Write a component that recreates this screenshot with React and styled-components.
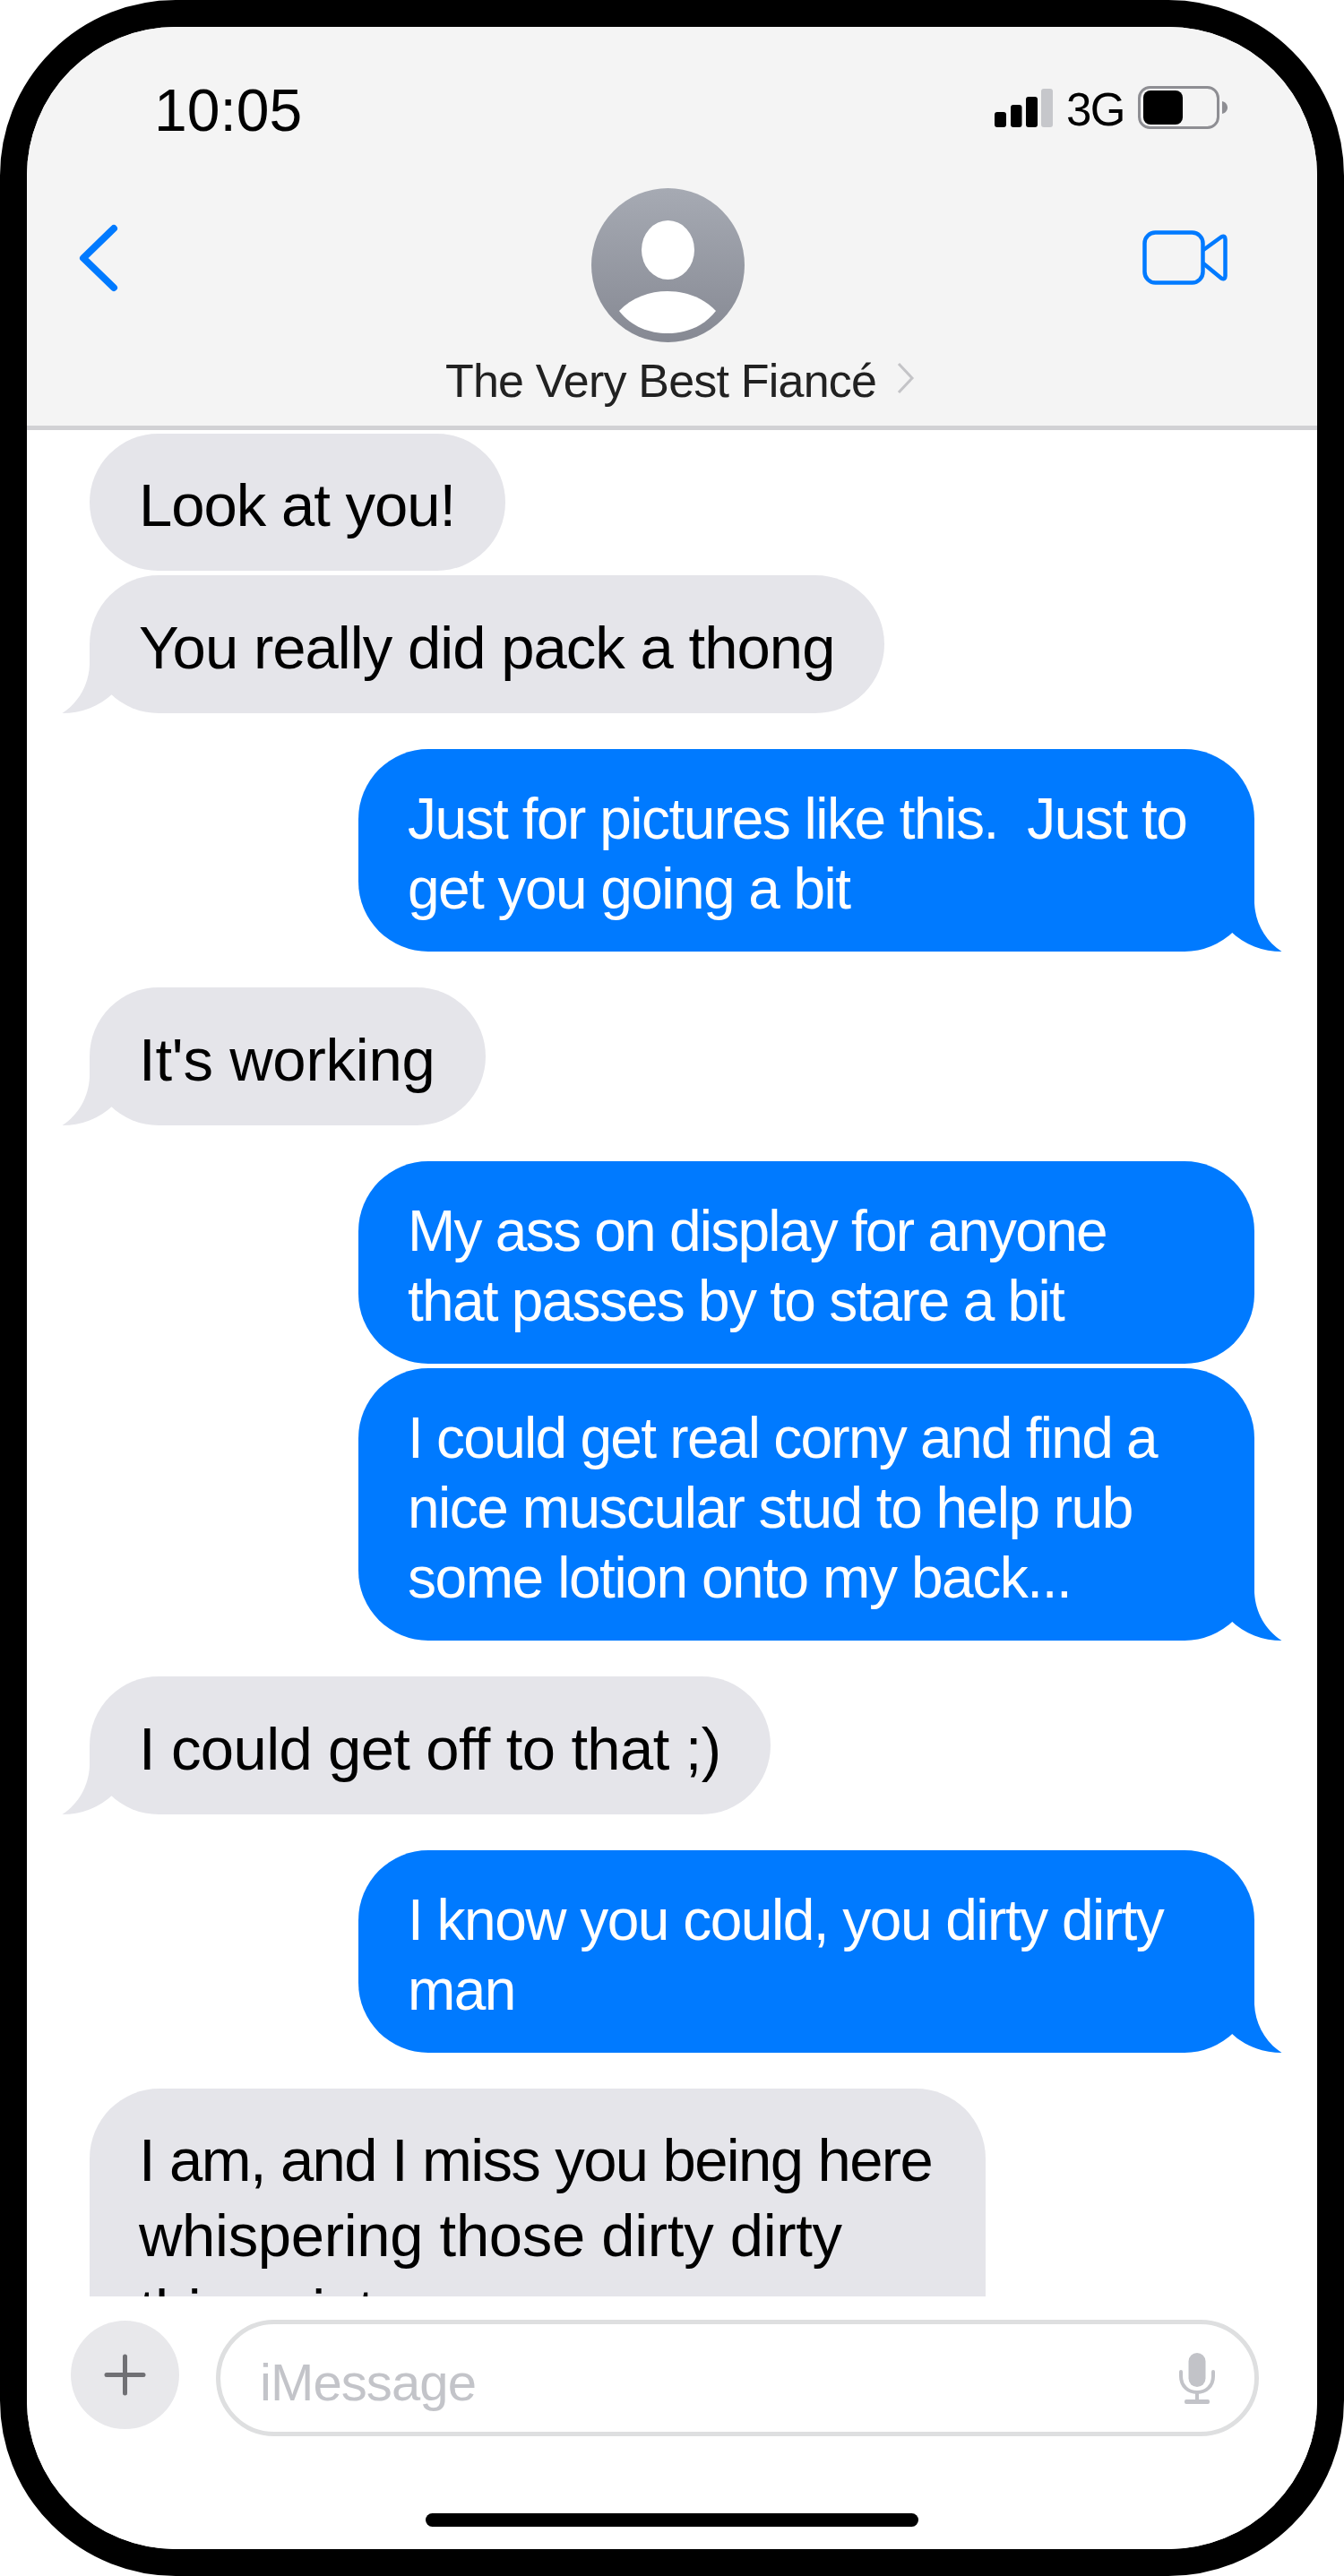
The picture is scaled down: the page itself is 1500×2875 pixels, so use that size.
import styled, { createGlobalStyle } from "styled-components";

const GlobalStyle = createGlobalStyle`
  * { box-sizing: border-box; }
  html, body { margin: 0; padding: 0; background: #fff; }
  body { font-family: "Liberation Sans", Arial, sans-serif; }
`;

const BLUE = "#007aff";
const GRAY = "#e5e5ea";

// each line: [text, letter-spacing in px]
const messages = [
  { id: 1, lines: [["Look at you!", -1]], first: true },
  { id: 2, lines: [["You really did pack a thong", -0.95]], grouped: true, tail: true },
  {
    id: 3,
    lines: [
      ["Just for pictures like this.  Just to", -1.5],
      ["get you going a bit", -1.56],
    ],
    mine: true,
    tail: true,
  },
  { id: 4, lines: [["It's working", -0.2]], tail: true },
  {
    id: 5,
    lines: [
      ["My ass on display for anyone", -1.75],
      ["that passes by to stare a bit", -1.75],
    ],
    mine: true,
  },
  {
    id: 6,
    lines: [
      ["I could get real corny and find a", -1.73],
      ["nice muscular stud to help rub", -1.5],
      ["some lotion onto my back...", -1.43],
    ],
    mine: true,
    grouped: true,
    tail: true,
  },
  { id: 7, lines: [["I could get off to that ;)", -0.62]], tail: true },
  {
    id: 8,
    lines: [
      ["I know you could, you dirty dirty", -1.5],
      ["man", -1.56],
    ],
    mine: true,
    tail: true,
  },
  {
    id: 9,
    lines: [
      ["I am, and I miss you being here", -1.6],
      ["whispering those dirty dirty", -0.3],
      ["things into my ear", -0.6],
    ],
    wide: true,
  },
];

export default function App() {
  return (
    <>
      <GlobalStyle />
      <Phone>
        <Header>
          <StatusBar>
            <Time>10:05</Time>
            <StatusIcons>
              <SignalIcon />
              <Network>3G</Network>
              <BatteryIcon />
            </StatusIcons>
          </StatusBar>
          <NavBar>
            <BackIcon />
            <Contact>
              <AvatarIcon />
              <NameRow>
                <Name>The Very Best Fiancé</Name>
                <NameChevron />
              </NameRow>
            </Contact>
            <VideoIcon />
          </NavBar>
        </Header>

        <Thread>
          {messages.map((m) => (
            <Bubble key={m.id} $mine={m.mine} $grouped={m.grouped} $first={m.first} $wide={m.wide}>
              {m.lines.map(([text, tracking]) => (
                <Line key={text} $tracking={tracking}>
                  {text}
                </Line>
              ))}
              {m.tail && <Tail $mine={m.mine} />}
            </Bubble>
          ))}
        </Thread>

        <Footer>
          <InputRow>
            <PlusButton>
              <PlusIcon />
            </PlusButton>
            <MessageInput>
              <Placeholder>iMessage</Placeholder>
              <MicIcon />
            </MessageInput>
          </InputRow>
          <HomeBar />
        </Footer>
      </Phone>
    </>
  );
}

function Tail({ $mine }) {
  return (
    <TailSvg $mine={$mine} viewBox="0 0 72 78" aria-hidden="true">
      <path
        d="M40 0 L40 24 C41 46 52 66 70.5 78 C50 78 29 71 13 55 L0 36 L0 0 Z"
        fill={$mine ? BLUE : GRAY}
      />
    </TailSvg>
  );
}

function SignalIcon() {
  return (
    <svg width="65" height="44" viewBox="0 0 65 44" aria-hidden="true">
      <rect x="0" y="26" width="13" height="17" rx="3" fill="#000" />
      <rect x="18" y="18" width="12.5" height="25" rx="3" fill="#000" />
      <rect x="35" y="9" width="13" height="34" rx="3" fill="#000" />
      <rect x="52" y="0" width="13" height="43" rx="3" fill="#c6c7cb" />
    </svg>
  );
}

function BatteryIcon() {
  return (
    <svg width="101" height="48" viewBox="0 0 101 48" aria-hidden="true">
      <rect x="1.5" y="1.5" width="88" height="45" rx="12" fill="none" stroke="#8e8e93" strokeWidth="3" />
      <rect x="6" y="5" width="44" height="38" rx="8" fill="#000" />
      <path d="M94 17 C98 18 100 21 100 24 C100 27 98 30 94 31 Z" fill="#8e8e93" />
    </svg>
  );
}

function BackIcon() {
  return (
    <BackSvg width="44" height="76" viewBox="0 0 44 76" aria-hidden="true">
      <polyline
        points="39,5 5,38 39,71"
        fill="none"
        stroke={BLUE}
        strokeWidth="8"
        strokeLinecap="round"
        strokeLinejoin="round"
      />
    </BackSvg>
  );
}

function VideoIcon() {
  return (
    <VideoSvg width="95" height="61" viewBox="0 0 95 61" aria-hidden="true">
      <rect x="2.5" y="2.5" width="65" height="56" rx="12" fill="none" stroke={BLUE} strokeWidth="4.5" />
      <path
        d="M68 22 L88 7.5 Q92.5 5 92.5 10 V51 Q92.5 56 88 53.5 L68 37"
        fill="none"
        stroke={BLUE}
        strokeWidth="4.5"
        strokeLinejoin="round"
      />
    </VideoSvg>
  );
}

function AvatarIcon() {
  return (
    <AvatarSvg width="171" height="172" viewBox="0 0 171 172" aria-hidden="true">
      <defs>
        <linearGradient id="avatarFill" x1="0" y1="0" x2="0" y2="1">
          <stop offset="0" stopColor="#a6aab3" />
          <stop offset="1" stopColor="#868993" />
        </linearGradient>
      </defs>
      <ellipse cx="85.5" cy="86" rx="85.5" ry="86" fill="url(#avatarFill)" />
      <ellipse cx="85.5" cy="69" rx="29.5" ry="33" fill="#fff" />
      <path d="M31 137 C45 122 65 115 85 115 C105 115 125 122 139 137 C125 155 105 162 85 162 C65 162 45 155 31 137 Z" fill="#fff" />
    </AvatarSvg>
  );
}

function NameChevron() {
  return (
    <ChevronSvg width="20" height="36" viewBox="0 0 20 36" aria-hidden="true">
      <polyline points="2,2 17,18 2,34" fill="none" stroke="#c4c4c7" strokeWidth="3" />
    </ChevronSvg>
  );
}

function PlusIcon() {
  return (
    <svg width="47" height="47" viewBox="0 0 47 47" aria-hidden="true">
      <path d="M23.5 3 V44 M3 23.5 H44" stroke="#707074" strokeWidth="5" strokeLinecap="round" />
    </svg>
  );
}

function MicIcon() {
  return (
    <MicSvg width="40" height="57" viewBox="0 0 40 57" aria-hidden="true">
      <rect x="10.5" y="0" width="19" height="38" rx="9.5" fill="#c2c3c8" />
      <path d="M2 21 V26 C2 37 10 44 20 44 C30 44 38 37 38 26 V21" fill="none" stroke="#c2c3c8" strokeWidth="4" strokeLinecap="round" />
      <rect x="18" y="44" width="4" height="9" fill="#c2c3c8" />
      <rect x="6" y="52" width="28" height="5" rx="2" fill="#c2c3c8" />
    </MicSvg>
  );
}

const Phone = styled.div`
  width: 1500px;
  height: 2875px;
  border: 30px solid #000;
  border-radius: 196px;
  background: #fff;
  overflow: hidden;
  display: flex;
  flex-direction: column;
`;

const Header = styled.header`
  flex: none;
  height: 450px;
  background: #f4f4f4;
  border-bottom: 5px solid #d1d1d4;
`;

const StatusBar = styled.div`
  height: 180px;
  padding: 61px 99px 0 142px;
  display: flex;
  justify-content: space-between;
  align-items: flex-start;
`;

const Time = styled.div`
  font-size: 66px;
  line-height: 65px;
  color: #000;
`;

const StatusIcons = styled.div`
  margin-top: 5px;
  display: flex;
  align-items: flex-start;
  gap: 15px;

  svg:first-child {
    margin-top: 3px;
  }
`;

const Network = styled.div`
  font-size: 51px;
  line-height: 48px;
  padding-top: 3px;
  letter-spacing: -1.5px;
  color: #000;
`;

const NavBar = styled.nav`
  padding: 0 100px 0 58px;
  display: grid;
  grid-template-columns: 44px 1fr 95px;
  align-items: start;
`;

const BackSvg = styled.svg`
  margin-top: 40px;
`;

const VideoSvg = styled.svg`
  margin-top: 47px;
`;

const Contact = styled.div`
  margin-left: 365px;
  display: flex;
  flex-direction: column;
  align-items: flex-start;
`;

const AvatarSvg = styled.svg`
  display: block;
  margin-left: 163px;
`;

const NameRow = styled.div`
  margin-top: 13px;
  display: flex;
  align-items: flex-start;
  gap: 23px;
`;

const Name = styled.div`
  font-size: 52px;
  line-height: 60px;
  letter-spacing: -0.8px;
  color: #222;
  white-space: nowrap;
`;

const ChevronSvg = styled.svg`
  margin-top: 9px;
`;

const Thread = styled.main`
  flex: 1;
  min-height: 0;
  padding: 4px 70px 0;
  overflow: hidden;
  display: flex;
  flex-direction: column;
`;

const Bubble = styled.div`
  position: relative;
  flex: none;
  align-self: ${(p) => (p.$mine ? "flex-end" : "flex-start")};
  width: ${(p) => (p.$mine || p.$wide ? "1000px" : "fit-content")};
  margin-top: ${(p) => (p.$first ? "0" : p.$grouped ? "5px" : "40px")};
  padding: ${(p) => (p.$mine ? "38.8px 55px 31.5px" : "38.3px 56px 31.2px 55px")};
  border-radius: 78px;
  background: ${(p) => (p.$mine ? BLUE : GRAY)};
  color: ${(p) => (p.$mine ? "#fff" : "#000")};
  font-size: ${(p) => (p.$mine ? "64px" : "67px")};
  line-height: ${(p) => (p.$mine ? "78px" : "84px")};
`;

const Line = styled.div`
  letter-spacing: ${(p) => p.$tracking}px;
  white-space: pre;
`;

const TailSvg = styled.svg`
  position: absolute;
  bottom: 0;
  width: 72px;
  height: 78px;
  ${(p) => (p.$mine ? "right: -32px;" : "left: -32px; transform: scaleX(-1);")}
`;

const Footer = styled.footer`
  flex: none;
  height: 282.5px;
  padding-top: 26.5px;
  background: #fff;
  display: flex;
  flex-direction: column;
`;

const InputRow = styled.div`
  padding-left: 49px;
  display: flex;
  align-items: flex-start;
  gap: 41px;
`;

const PlusButton = styled.div`
  flex: none;
  width: 121px;
  height: 121px;
  margin-top: 1px;
  border-radius: 50%;
  background: #e8e8eb;
  display: flex;
  align-items: center;
  justify-content: center;
`;

const MessageInput = styled.div`
  width: 1163.5px;
  height: 130px;
  padding: 0 44px 0 44px;
  border: 5px solid #dedfe0;
  border-radius: 65px;
  display: flex;
  justify-content: space-between;
  align-items: flex-start;
`;

const Placeholder = styled.div`
  margin-top: 32px;
  font-size: 58px;
  line-height: 66px;
  letter-spacing: -0.9px;
  color: #c3c4c9;
`;

const MicSvg = styled.svg`
  margin-top: 31.5px;
`;

const HomeBar = styled.div`
  width: 550px;
  height: 15px;
  margin: 86px 0 0 445px;
  border-radius: 8px;
  background: #000;
`;
